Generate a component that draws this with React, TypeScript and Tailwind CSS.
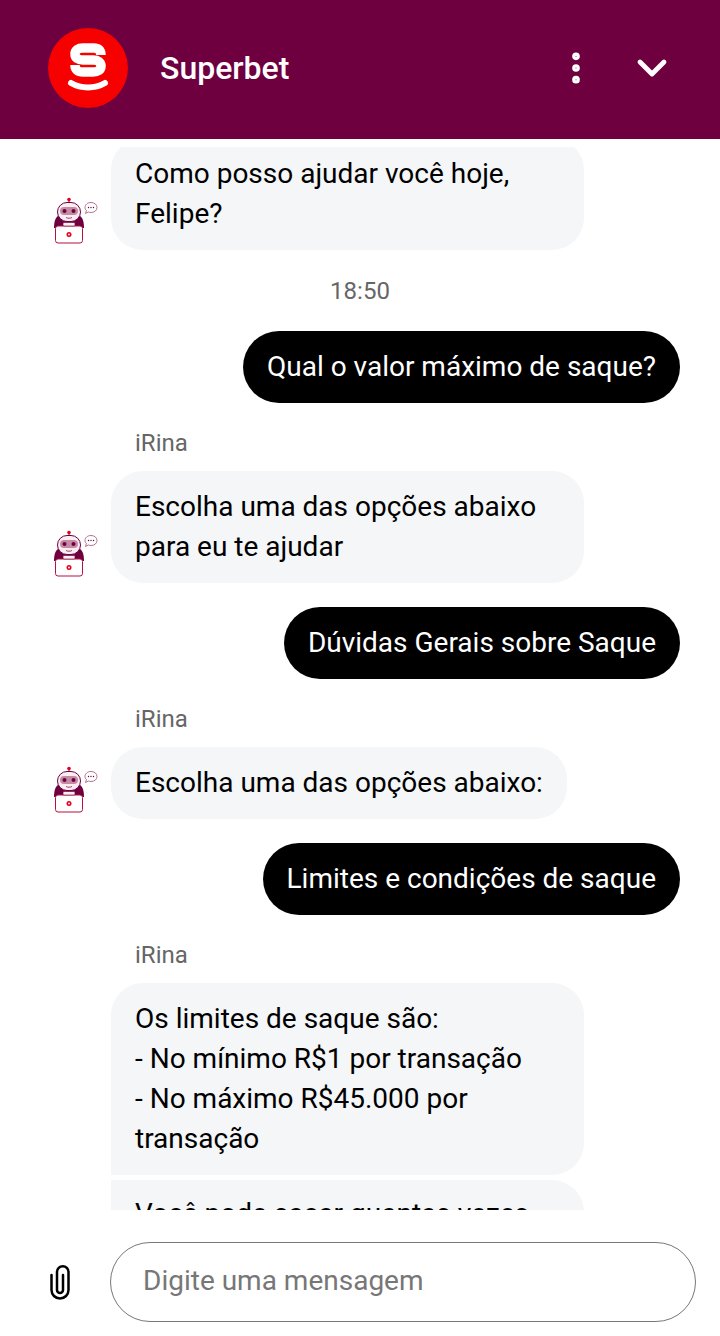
import { ChevronDown, EllipsisVertical } from "lucide-react";

const SuperbetLogo = () => (
  <div className="flex h-20 w-20 items-center justify-center rounded-full bg-[#f60000]">
    <svg width="80" height="80" viewBox="0 0 80 80" fill="none">
      <path
        d="M53 27C53 22 50 20 46 20H35C30 20 27 22 27 26C27 30 30 32 35 32H45C50 32 53 34 53 38C53 42 50 44 45 44H35C30 44 27 42 27 37"
        stroke="#fff"
        strokeWidth="9.500"
      />
      <path d="M23 55C33 61 47 61 57 55" stroke="#fff" strokeWidth="6" strokeLinecap="round" />
    </svg>
  </div>
);

const RobotAvatar = () => (
  <svg width="46" height="48" viewBox="0 0 46 48" fill="none" className="shrink-0">
    <circle cx="17" cy="2.500" r="1.800" fill="#e2001a" />
    <path d="M17 4v3" stroke="#6f0040" strokeWidth="1" />
    <path d="M2 31c0-8 2-12 7-14h16c5 2 7 6 7 14z" fill="#6f0040" />
    <rect x="5.500" y="5.500" width="23" height="19" rx="9.500" fill="#fbeef1" stroke="#6f0040" strokeWidth="1" />
    <rect x="8" y="10" width="18" height="8" rx="4" fill="#c58aa4" />
    <circle cx="12.500" cy="14" r="2" fill="#6f0040" />
    <circle cx="21.500" cy="14" r="2" fill="#6f0040" />
    <path d="M14 20.500c2 1 4 1 6 0" stroke="#6f0040" strokeWidth="0.7" />
    <rect x="3.500" y="29" width="27" height="17" rx="2.500" fill="#fff" stroke="#b3123f" strokeWidth="1" />
    <rect x="11" y="25.500" width="12" height="3.500" rx="1" fill="#fbeef1" stroke="#6f0040" strokeWidth="0.6" />
    <circle cx="17" cy="37.500" r="2.500" fill="#e2001a" />
    <circle cx="17" cy="37.500" r="0.900" fill="#fff" />
    <path d="M39 5.500c3.500 0 6 2.200 6 5s-2.500 5-6 5c-1 0-1.900-.2-2.700-.5L33.500 16.500l.9-3c-1-.9-1.400-1.900-1.400-3 0-2.800 2.500-5 6-5z" fill="#fff" stroke="#a0506f" strokeWidth="0.8" />
    <circle cx="36.500" cy="10.500" r="0.700" fill="#6f0040" />
    <circle cx="39" cy="10.500" r="0.700" fill="#6f0040" />
    <circle cx="41.500" cy="10.500" r="0.700" fill="#6f0040" />
  </svg>
);

const PaperclipIcon = () => (
  <svg width="20" height="36" viewBox="0 0 20 36" fill="none" className="shrink-0">
    <path
      d="M1.500 11V26a8.500 8.500 0 0 0 17 0V8a5.750 5.750 0 0 0-11.500 0V26a3 3 0 0 0 6 0V11"
      stroke="#000"
      strokeWidth="2.500"
      strokeLinecap="round"
    />
  </svg>
);

const BotBubble = ({ text, className = "rounded-[32px] py-4" }: { text: string; className?: string }) => (
  <div className={`max-w-[473px] whitespace-pre-line bg-[#f4f6f8] px-6 ${className}`}>{text}</div>
);

const BotLabel = () => <p className="mb-3 ml-[135px] mt-6 h-8 text-[24px] leading-8 text-[#666]">iRina</p>;

const BotRow = ({ text }: { text: string }) => (
  <div className="flex items-end pl-[52px]">
    <div className="mb-[5px] mr-[13px] w-[46px]">
      <RobotAvatar />
    </div>
    <BotBubble text={text} />
  </div>
);

const UserBubble = ({ text }: { text: string }) => (
  <div className="mt-6 flex justify-end pr-10">
    <div className="rounded-[36px] bg-black px-6 py-4 text-white">{text}</div>
  </div>
);

export default function App() {
  return (
    <div className="flex h-[1336px] w-[720px] flex-col overflow-hidden bg-white font-['Roboto',sans-serif] text-[28px] leading-10 text-black">
      {/* Header */}
      <header className="flex h-[139px] shrink-0 items-center bg-[#6f0040] pb-[4px] pl-12 pr-[44px] text-white">
        <SuperbetLogo />
        <span className="ml-8 text-[32px] font-medium leading-10">Superbet</span>
        <EllipsisVertical size={40} strokeWidth={2.6} className="ml-auto" />
        <ChevronDown size={48} strokeWidth={2.4} className="ml-[32px]" />
      </header>

      {/* Messages */}
      <div className="mt-2 h-[1063px] shrink-0 overflow-hidden">
        <div className="-mt-[9px]">
          <BotRow text="Como posso ajudar você hoje, Felipe?" />
          <p className="mt-6 h-[33px] text-center text-[24px] leading-[34px] text-[#666]">18:50</p>
          <UserBubble text="Qual o valor máximo de saque?" />
          <BotLabel />
          <BotRow text="Escolha uma das opções abaixo para eu te ajudar" />
          <UserBubble text="Dúvidas Gerais sobre Saque" />
          <BotLabel />
          <BotRow text="Escolha uma das opções abaixo:" />
          <UserBubble text="Limites e condições de saque" />
          <BotLabel />
          <div className="pl-[111px]">
            <BotBubble
              className="rounded-t-[32px] rounded-br-[32px] py-4"
              text={"Os limites de saque são:\n- No mínimo R$1 por transação\n- No máximo R$45.000 por transação"}
            />
            <BotBubble className="mt-[5px] rounded-tr-[32px] pb-4 pt-[14px]" text="Você pode sacar quantas vezes" />
          </div>
        </div>
      </div>

      {/* Footer */}
      <footer className="mt-8 flex items-center pl-[50px]">
        <PaperclipIcon />
        <div className="ml-10 flex h-20 w-[586px] items-center rounded-[40px] border border-[#777] pb-[2px] pl-8 text-[#777]">
          Digite uma mensagem
        </div>
      </footer>
    </div>
  );
}
